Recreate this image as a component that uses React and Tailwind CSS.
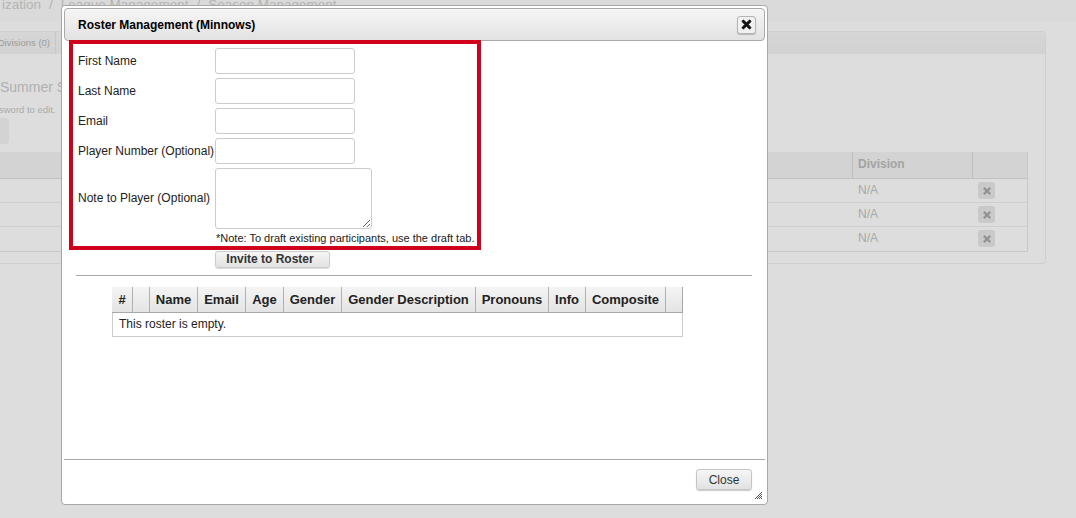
import React from 'react';
import { FaTimes } from 'react-icons/fa';

const fields = ['First Name', 'Last Name', 'Email', 'Player Number (Optional)'];

const rosterColumns = [
  { label: '#', width: 'w-[21px]' },
  { label: '', width: 'w-[17px]' },
  { label: 'Name', width: 'w-[48px]' },
  { label: 'Email', width: 'w-[48px]' },
  { label: 'Age', width: 'w-[38px]' },
  { label: 'Gender', width: 'w-[58px]' },
  { label: 'Gender Description', width: 'w-[134px]' },
  { label: 'Pronouns', width: 'w-[73px]' },
  { label: 'Info', width: 'w-[37px]' },
  { label: 'Composite', width: 'w-[80px]' },
  { label: '', width: 'flex-1' },
];

function BackgroundPage() {
  return (
    <div className="h-[518px] overflow-hidden bg-[#dddddd] text-[#a3a3a3]">
      <div className="h-[21px] bg-[#dadada] overflow-hidden">
        <div className="flex -mt-[5px] ml-[2px] text-[13.5px] leading-[20px] text-[#b4b4b4] whitespace-nowrap">
          <span>ization</span>
          <span className="ml-[8px]">/</span>
          <span className="ml-[8px]">League Management</span>
          <span className="ml-[8px]">/</span>
          <span className="ml-[8px]">Season Management</span>
        </div>
      </div>
      <div className="mt-[10px] mr-[30px] h-[233px] border border-l-0 border-[#cfcfcf] rounded-r-[4px]">
        <div className="h-[22px] bg-gradient-to-b from-[#d6d6d6] to-[#d2d2d2] rounded-tr-[4px] flex">
          <div className="w-[56px] flex justify-end overflow-hidden border-r border-[#c8c8c8] pr-[5px] text-[9.5px] leading-[22px] text-[#9a9a9a] whitespace-nowrap">
            <span className="shrink-0">Divisions (0)</span>
          </div>
        </div>
        <div className="h-[24px] mt-[11px] text-[14px] leading-[44px] text-[#b0b0b0]">Summer S</div>
        <div className="mt-[15px] -ml-[1px] text-[9.5px] leading-[12px] text-[#aaaaaa]">sword to edit.</div>
        <div className="mt-[2px] w-[9px] h-[26px] bg-[#d3d3d3] rounded-r-[4px]"></div>
        <div className="mt-[8px] mr-[17px] border-r border-b border-[#c8c8c8]">
          <div className="flex h-[27px] justify-end bg-[#d3d3d3] border-b border-[#c0c0c0] text-[12px] font-bold leading-[24px]">
            <div className="w-[120px] border-l border-[#bdbdbd] pl-[5px]">Division</div>
            <div className="w-[55px] border-l border-[#bdbdbd]"></div>
          </div>
          {[0, 1, 2].map((row) => (
            <div key={row} className="flex h-[24px] justify-end border-b last:border-b-0 border-[#cfcfcf] text-[12px] leading-[23px] text-[#a8a8a8]">
              <div className="w-[120px] pl-[6px]">N/A</div>
              <div className="w-[55px] pl-[6px] pt-[3px]">
                <div className="w-[17px] h-[17px] rounded-[3px] bg-[#c9c9c9] flex items-center justify-center">
                  <FaTimes className="w-[10px] h-[10px] text-[#8f8f8f]" stroke="currentColor" strokeWidth="30" />
                </div>
              </div>
            </div>
          ))}
        </div>
      </div>
    </div>
  );
}

function RosterDialog() {
  return (
    <div className="absolute left-[61px] top-[5px] w-[707px] h-[500px] bg-white border border-[#a8a8a8] rounded-[4px] p-[2px] flex flex-col text-[12px] text-[#222222]">
      <div className="h-[33px] shrink-0 flex items-center justify-between border border-[#aaaaaa] rounded-[4px] bg-gradient-to-b from-[#f6f6f6] to-[#e2e2e2] pl-[13px] pr-[8px]">
        <span className="font-bold text-[12px] text-black">Roster Management (Minnows)</span>
        <button className="w-[19px] h-[18px] flex items-center justify-center bg-[#f0f0f0] border border-[#b5b5b5] rounded-[3px] shadow-[0_1px_1px_rgba(0,0,0,0.2)]">
          <FaTimes className="w-[13px] h-[13px] text-[#111111]" stroke="currentColor" strokeWidth="30" />
        </button>
      </div>

      <div className="ml-[5px] -mt-[1px] w-[412px] h-[210px] shrink-0 border-[4px] border-[#d0021b] pl-[5px] pt-[4px]">
        {fields.map((label) => (
          <div key={label} className="flex items-center h-[26px] mb-[4px]">
            <label className="w-[137px] shrink-0 whitespace-nowrap">{label}</label>
            <input className="w-[140px] h-[26px] border border-[#cccccc] rounded-[3px] bg-white" />
          </div>
        ))}
        <div className="flex items-center">
          <label className="w-[137px] shrink-0 whitespace-nowrap -mt-[2px]">Note to Player (Optional)</label>
          <textarea className="w-[157px] h-[61px] border border-[#cccccc] rounded-[3px] bg-white block"></textarea>
        </div>
        <div className="ml-[138px] mt-[2px] text-[11px] leading-[14px] whitespace-nowrap">*Note: To draft existing participants, use the draft tab.</div>
      </div>

      <button className="ml-[151px] mt-[1px] w-[115px] h-[17px] shrink-0 pr-[5px] bg-gradient-to-b from-[#f6f6f6] to-[#e2e2e2] border border-[#cccccc] rounded-[3px] font-bold text-[12px] leading-[13px] text-[#333333] shadow-[0_1px_1px_rgba(0,0,0,0.15)]">Invite to Roster</button>

      <div className="ml-[12px] mr-[13px] mt-[7px] border-t border-[#a8a8a8] shrink-0"></div>

      <div className="ml-[48px] mt-[11px] w-[571px] shrink-0">
        <div className="flex h-[26px] bg-gradient-to-b from-[#f4f4f4] to-[#e4e4e4] border-b border-[#a8a8a8] border-r">
          {rosterColumns.map((col, idx) => (
            <div key={idx} className={`${col.width} border-r last:border-r-0 border-[#b0b0b0] text-center font-bold text-[13px] leading-[25px] text-[#222222]`}>{col.label}</div>
          ))}
        </div>
        <div className="h-[24px] border border-t-0 border-[#cccccc] pl-[6px] leading-[22px]">This roster is empty.</div>
      </div>

      <div className="flex-1"></div>

      <div className="h-[43px] shrink-0 border-t border-[#a8a8a8] flex justify-end pt-[9px] pr-[13px] relative">
        <button className="w-[56px] h-[21px] bg-gradient-to-b from-[#f6f6f6] to-[#e2e2e2] border border-[#c4c4c4] rounded-[3px] text-[12px] leading-[16px] text-[#333333] shadow-[0_1px_1px_rgba(0,0,0,0.2)]">Close</button>
        <svg className="absolute right-[2px] bottom-[2px]" width="9" height="9" viewBox="0 0 9 9" stroke="#555555" strokeWidth="1">
          <path d="M1 8 8 1M3 8 8 3M5 8 8 5M7 8 8 7" />
        </svg>
      </div>
    </div>
  );
}

export default function App() {
  return (
    <div className="relative w-[1076px] h-[518px] overflow-hidden font-['Liberation_Sans',Arial,sans-serif]">
      <BackgroundPage />
      <RosterDialog />
    </div>
  );
}
